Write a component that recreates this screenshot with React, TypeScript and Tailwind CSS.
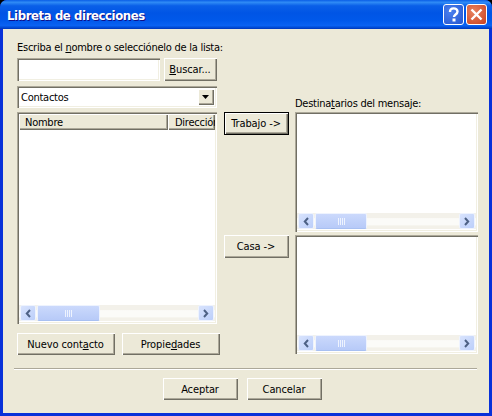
import React from "react";

const sunken =
  "bg-white shadow-[inset_1px_1px_0_#aca899,inset_2px_2px_0_#716f64,inset_-1px_-1px_0_#fff,inset_-2px_-2px_0_#f1efe2]";
const raised =
  "bg-[#ece9d8] shadow-[inset_1px_1px_0_#fff,inset_-1px_-1px_0_#716f64,inset_-2px_-2px_0_#aca899]";

function Btn({ children, className = "" }: { children: React.ReactNode; className?: string }) {
  return (
    <div className={`flex items-center justify-center pr-[1px] tracking-[-0.1px] text-black ${raised} ${className}`}>
      <span>{children}</span>
    </div>
  );
}

function DefaultBtn({ children, className = "" }: { children: React.ReactNode; className?: string }) {
  return (
    <div className={`border border-black ${className}`}>
      <div className={`flex h-full w-full items-center justify-center pr-[1px] tracking-[-0.1px] text-black ${raised}`}>
        <span>{children}</span>
      </div>
    </div>
  );
}

function Arrow({ right }: { right?: boolean }) {
  return (
    <div className="flex h-[16px] w-[16px] items-center justify-center rounded-[2px] border border-[#eef3fe] bg-[linear-gradient(135deg,#d8e3fd,#bccffa)]">
      <svg width="8" height="9" viewBox="0 0 8 9">
        <path
          d={right ? "M2 1l3.2 3.5L2 8" : "M6 1L2.8 4.5 6 8"}
          fill="none"
          stroke="#4d6185"
          strokeWidth="2"
        />
      </svg>
    </div>
  );
}

function ScrollBar({ thumb }: { thumb: string }) {
  return (
    <div className="flex h-[16px] items-stretch justify-between bg-[linear-gradient(#f3f1ea_0,#f3f1ea_30%,#fbfbf8_35%,#fbfbf8_75%,#f3f1e9_80%)] px-[1px]">
      <div className="flex">
        <Arrow />
        <div
          className={`ml-[1px] flex items-center justify-center rounded-[2px] border border-[#eef3fe] border-b-[#a8c0f2] bg-[linear-gradient(#cbd9fc,#b7caf8)] ${thumb}`}
        >
          <div className="flex gap-[1px]">
            <div className="h-[7px] w-[1px] bg-[#eef3fe]" />
            <div className="h-[7px] w-[1px] bg-[#eef3fe]" />
            <div className="h-[7px] w-[1px] bg-[#eef3fe]" />
            <div className="h-[7px] w-[1px] bg-[#eef3fe]" />
          </div>
        </div>
      </div>
      <Arrow right />
    </div>
  );
}

function RecipientList({ className = "" }: { className?: string }) {
  return (
    <div className={`flex flex-col p-[2px] pb-[3px] ${sunken} ${className}`}>
      <div className="flex-1" />
      <ScrollBar thumb="w-[52px]" />
    </div>
  );
}

export default function App() {
  return (
    <div className="h-[416px] w-[492px] overflow-hidden bg-[#000] font-['DejaVu_Sans_Condensed','DejaVu_Sans',sans-serif] text-[11px] leading-[13px] tracking-[-0.25px]">
      <div className="flex h-[416px] w-[492px] flex-col overflow-hidden rounded-t-[7px] bg-[#0831d9]">
        {/* title bar */}
        <div className="flex h-[29px] shrink-0 items-center bg-[linear-gradient(180deg,#0a5ee6_0,#2f8bf5_8%,#0a5fe8_20%,#0055e5_45%,#0058ea_70%,#0a62f2_88%,#0047d0_96%,#0035b8_100%)] pl-[7px] pr-[5px]">
          <span className="flex-1 pt-[2px] text-[13px] font-bold tracking-[-0.4px] text-white [text-shadow:1px_1px_0_#0f1089]">
            Libreta de direcciones
          </span>
          <div className="flex h-[21px] w-[21px] items-center justify-center rounded-[3px] border border-white bg-[radial-gradient(circle_at_35%_35%,#4b80ee,#2556cf)]">
            <svg width="13" height="15" viewBox="0 0 13 15">
              <path d="M3 5c0-5 7.500-4.500 7.500-.5 0 3-3.500 3-3.500 5.500" fill="none" stroke="#fff" strokeWidth="2.400" />
              <rect x="5.500" y="11.500" width="3" height="3" fill="#fff" />
            </svg>
          </div>
          <div className="ml-[2px] flex h-[21px] w-[21px] items-center justify-center rounded-[3px] border border-white bg-[radial-gradient(circle_at_35%_35%,#e8835f,#c9401f)]">
            <svg width="13" height="13" viewBox="0 0 13 13">
              <path d="M1.500 1.500l10 10M11.500 1.500l-10 10" fill="none" stroke="#fff" strokeWidth="2.400" />
            </svg>
          </div>
        </div>

        {/* client area */}
        <div className="mx-[3px] mb-[3px] flex min-h-0 flex-1 flex-col bg-[#ece9d8] pl-[14px] pr-[8px]">
          <div className="flex">
            {/* left column */}
            <div className="w-[203px] shrink-0 pt-[12px]">
              <div className="h-[17px] whitespace-nowrap text-black">
                Escriba el <span className="underline">n</span>ombre o selecciónelo de la lista:
              </div>
              <div className="flex w-[200px] justify-between">
                <div className={`h-[23px] w-[143px] ${sunken}`} />
                <Btn className="h-[23px] w-[53px]">
                  <span className="underline">B</span>uscar...
                </Btn>
              </div>
              <div className={`mt-[5px] flex h-[22px] w-[200px] items-center justify-between pl-[4px] pr-[3px] ${sunken}`}>
                <span className="text-black">Contactos</span>
                <div className={`flex h-[16px] w-[16px] items-center justify-center ${raised}`}>
                  <svg width="8" height="4" viewBox="0 0 8 4">
                    <path d="M0 0h7L3.500 4z" fill="#000" />
                  </svg>
                </div>
              </div>
              <div className={`mt-[4px] flex h-[212px] w-[200px] flex-col p-[2px] pb-[3px] ${sunken}`}>
                <div className="flex h-[16px] overflow-hidden text-black">
                  <div className={`flex w-[149px] shrink-0 items-center pl-[6px] ${raised}`}>Nombre</div>
                  <div className={`flex flex-1 items-center overflow-hidden whitespace-nowrap pl-[7px] ${raised}`}>
                    Dirección
                  </div>
                </div>
                <div className="flex-1" />
                <ScrollBar thumb="w-[63px]" />
              </div>
              <div className="mt-[9px] flex gap-[7px]">
                <Btn className="h-[22px] w-[98px]">
                  Nuevo cont<span className="underline">a</span>cto
                </Btn>
                <Btn className="h-[22px] w-[98px]">
                  Propie<span className="underline">d</span>ades
                </Btn>
              </div>
            </div>

            {/* middle column */}
            <div className="ml-[4px] w-[65px] shrink-0 pt-[83px]">
              <DefaultBtn className="h-[23px] w-[65px]">Trabajo -&gt;</DefaultBtn>
              <Btn className="mt-[100px] h-[23px] w-[65px]">Casa -&gt;</Btn>
            </div>

            {/* right column */}
            <div className="ml-[6px] w-[183px] shrink-0 pt-[68px]">
              <div className="h-[15px] whitespace-nowrap text-black">
                Destina<span className="underline">t</span>arios del mensaje:
              </div>
              <RecipientList className="h-[120px]" />
              <RecipientList className="mt-[3px] h-[119px]" />
            </div>
          </div>

          {/* separator */}
          <div className="-ml-[3px] mt-[13px] h-[2px] w-[463px] border-t border-b border-t-[#aca899] border-b-white" />

          {/* footer */}
          <div className="mt-[8px] flex justify-center gap-[9px] pr-[13px]">
            <Btn className="h-[22px] w-[75px]">Aceptar</Btn>
            <Btn className="h-[22px] w-[75px]">Cancelar</Btn>
          </div>
        </div>
      </div>
    </div>
  );
}
